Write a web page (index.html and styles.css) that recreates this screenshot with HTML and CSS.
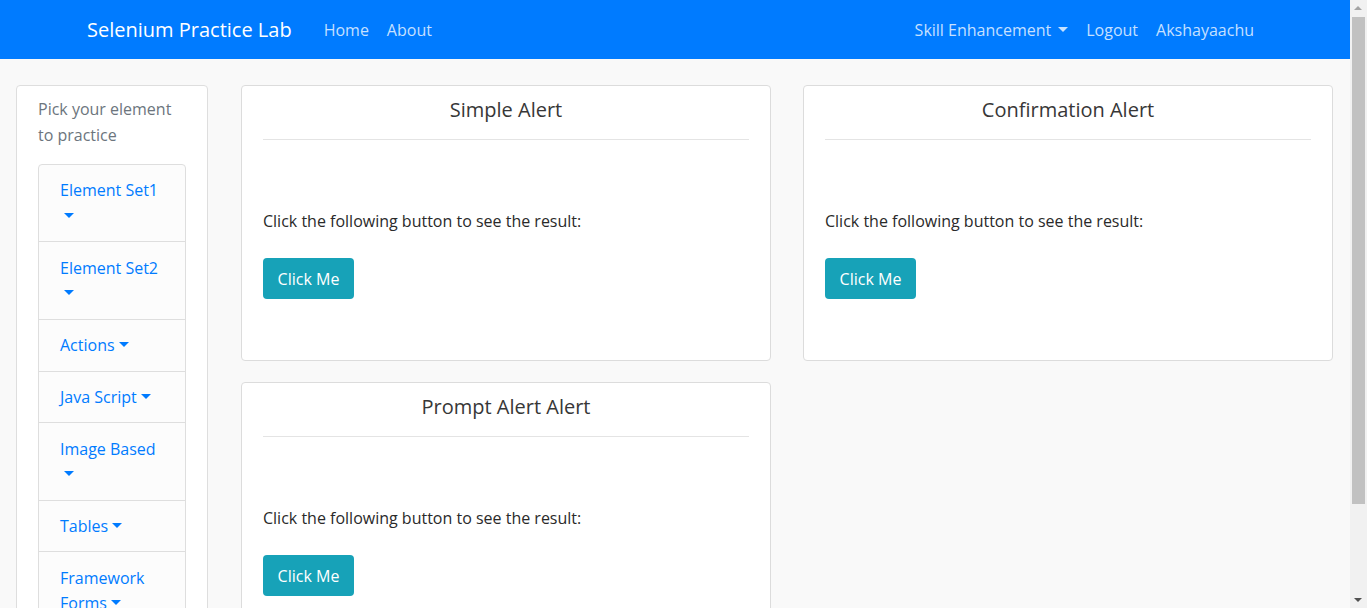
FILE: index.html
```html
<!DOCTYPE html>
<html lang="en">
<head>
<meta charset="utf-8">
<title>Selenium Practice Lab</title>
<link rel="stylesheet" href="styles.css">
</head>
<body>
<div class="viewport">
  <nav class="navbar">
    <div class="nav-inner">
      <a class="brand" href="#">Selenium Practice Lab</a>
      <ul class="nav-list nav-left">
        <li><a class="nav-link" href="#">Home</a></li>
        <li><a class="nav-link" href="#">About</a></li>
      </ul>
      <ul class="nav-list nav-right">
        <li><a class="nav-link" href="#">Skill Enhancement<span class="caret caret-nav"></span></a></li>
        <li><a class="nav-link" href="#">Logout</a></li>
        <li><a class="nav-link" href="#">Akshayaachu</a></li>
      </ul>
    </div>
  </nav>

  <div class="page">
    <aside class="sidebar">
      <p class="sidebar-intro">Pick your element<br>to practice</p>
      <ul class="list-group">
        <li class="list-item"><a href="#">Element Set1<br><span class="caret"></span></a></li>
        <li class="list-item"><a href="#">Element Set2<br><span class="caret"></span></a></li>
        <li class="list-item"><a href="#">Actions<span class="caret"></span></a></li>
        <li class="list-item"><a href="#">Java Script<span class="caret"></span></a></li>
        <li class="list-item"><a href="#">Image Based<br><span class="caret"></span></a></li>
        <li class="list-item"><a href="#">Tables<span class="caret"></span></a></li>
        <li class="list-item"><a href="#">Framework<br>Forms<span class="caret"></span></a></li>
      </ul>
    </aside>

    <main class="cards">
      <section class="card">
        <h4 class="card-title">Simple Alert</h4>
        <hr class="card-rule">
        <p class="card-text">Click the following button to see the result:</p>
        <button class="btn" type="button">Click Me</button>
      </section>
      <section class="card">
        <h4 class="card-title">Confirmation Alert</h4>
        <hr class="card-rule">
        <p class="card-text">Click the following button to see the result:</p>
        <button class="btn" type="button">Click Me</button>
      </section>
      <section class="card">
        <h4 class="card-title">Prompt Alert Alert</h4>
        <hr class="card-rule">
        <p class="card-text">Click the following button to see the result:</p>
        <button class="btn" type="button">Click Me</button>
      </section>
    </main>
  </div>
</div>

<div class="scrollbar">
  <span class="sb-arrow sb-up"></span>
  <span class="sb-thumb"></span>
  <span class="sb-arrow sb-down"></span>
</div>
</body>
</html>
```

FILE: styles.css
```css
* { box-sizing: border-box; }

html, body {
  margin: 0;
  height: 100%;
  overflow: hidden;
}

body {
  font-family: "Open Sans", "Noto Sans", "Liberation Sans", sans-serif;
  font-size: 16px;
  line-height: 26px;
  color: #212529;
  background: #f9f9f9;
}

a { text-decoration: none; }

.viewport {
  margin-right: 17px;
  height: 100%;
}

/* ---------- navbar ---------- */
.navbar {
  background: #007bff;
  height: 59px;
}

.nav-inner {
  max-width: 1200px;
  height: 100%;
  margin: 0 auto;
  padding: 1px 12px 0;
  display: flex;
  align-items: center;
}

.brand {
  color: #fff;
  font-size: 20px;
  line-height: 30px;
  margin-right: 23px;
}

.nav-list {
  list-style: none;
  margin: 0;
  padding: 0;
  display: flex;
}

.nav-right { margin-left: auto; }

.nav-link {
  display: block;
  padding: 0 9px;
  color: rgba(255, 255, 255, 0.78);
  line-height: 24px;
}

/* ---------- caret ---------- */
.caret {
  display: inline-block;
  width: 0;
  height: 0;
  margin-left: 4px;
  vertical-align: 4px;
  border-top: 5px solid currentColor;
  border-left: 5px solid transparent;
  border-right: 5px solid transparent;
}

.caret-nav { margin-left: 7px; }

/* ---------- page layout ---------- */
.page {
  display: flex;
  align-items: flex-start;
  gap: 33px;
  padding: 26px 17px 0 16px;
}

.sidebar {
  flex: 0 0 192px;
  background: #fff;
  border: 1px solid #dedede;
  border-radius: 4px;
  padding: 10px 21px 21px;
}

.sidebar-intro {
  margin: 0 0 16px;
  color: #6c757d;
}

.list-group {
  list-style: none;
  margin: 0;
  padding: 0;
  border: 1px solid #dedede;
  border-radius: 4px;
  background: #fcfcfc;
}

.list-item {
  padding: 13.3px 21px 11.9px;
  border-top: 1px solid #dedede;
  line-height: 25.6px;
}

.list-item:first-child { border-top: 0; }

.list-item a {
  color: #007bff;
}

/* ---------- cards ---------- */
.cards {
  display: grid;
  grid-template-columns: 530px 530px;
  column-gap: 32px;
  row-gap: 21px;
  align-items: start;
}

.card {
  background: #fff;
  border: 1px solid #dcdcdc;
  border-radius: 4px;
  padding: 12px 21px 61px;
}

.card-title {
  margin: 0;
  font-weight: 400;
  font-size: 20px;
  line-height: 24px;
  text-align: center;
  color: #373737;
}

.card-rule {
  margin: 17px 0 0;
  border: 0;
  border-top: 1px solid #e4e4e4;
  height: 0;
}

.card-text {
  margin: 68px 0 0;
  color: #2a2a2a;
}

.btn {
  display: block;
  margin-top: 24px;
  width: 91px;
  height: 41px;
  padding: 1px 0 0;
  border: 0;
  border-radius: 4px;
  background: #17a2b8;
  color: #fff;
  font-family: inherit;
  font-size: 16px;
  line-height: 40px;
  text-align: center;
}

/* ---------- fake scrollbar ---------- */
.scrollbar {
  position: fixed;
  top: 0;
  right: 0;
  width: 17px;
  height: 100%;
  background: #f1f1f1;
}

.sb-thumb {
  position: absolute;
  left: 2px;
  top: 17px;
  width: 13px;
  height: 487px;
  background: #c1c1c1;
}

.sb-arrow {
  position: absolute;
  left: 4px;
  width: 0;
  height: 0;
  border-left: 4.5px solid transparent;
  border-right: 4.5px solid transparent;
}

.sb-up {
  top: 6px;
  border-bottom: 4px solid #a3a3a3;
}

.sb-down {
  bottom: 6px;
  border-top: 4px solid #505050;
}
```
